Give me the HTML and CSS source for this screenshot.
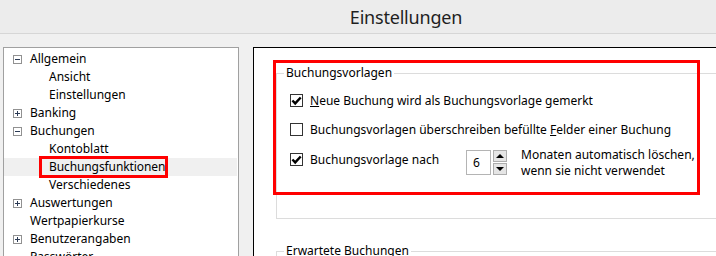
FILE: index.html
```html
<!DOCTYPE html>
<html lang="de">
<head>
<meta charset="utf-8">
<title>Einstellungen</title>
<link rel="stylesheet" href="styles.css">
</head>
<body>
<header class="titlebar"><h1 class="title">Einstellungen</h1></header>
<main class="content">
  <nav class="tree">
    <ul class="tree-list">
      <li class="node"><span class="exp minus"></span><span class="label">Allgemein</span></li>
      <li class="node child"><span class="label">Ansicht</span></li>
      <li class="node child"><span class="label">Einstellungen</span></li>
      <li class="node"><span class="exp plus"></span><span class="label">Banking</span></li>
      <li class="node"><span class="exp minus"></span><span class="label">Buchungen</span></li>
      <li class="node child"><span class="label">Kontoblatt</span></li>
      <li class="node child selected"><span class="label marked">Buchungsfunktionen</span></li>
      <li class="node child"><span class="label">Verschiedenes</span></li>
      <li class="node"><span class="exp plus"></span><span class="label">Auswertungen</span></li>
      <li class="node"><span class="label indent">Wertpapierkurse</span></li>
      <li class="node"><span class="exp plus"></span><span class="label">Benutzerangaben</span></li>
      <li class="node"><span class="label indent">Passwörter</span></li>
    </ul>
  </nav>
  <section class="panel">
    <div class="highlight"></div>
    <fieldset class="group">
      <legend class="legend">Buchungsvorlagen</legend>
      <div class="row">
        <span class="cb checked"><svg viewBox="0 0 11 11" width="11" height="11"><path d="M1.4 5.5 L4.2 8.4 L9.7 2.5" fill="none" stroke="#000" stroke-width="2.4"/></svg></span>
        <span class="cb-text"><u>N</u>eue Buchung wird als Buchungsvorlage gemerkt</span>
      </div>
      <div class="row">
        <span class="cb"></span>
        <span class="cb-text">Buchungsvorlagen überschreiben befüllte <u>F</u>elder einer Buchung</span>
      </div>
      <div class="row row-spin">
        <span class="cb checked"><svg viewBox="0 0 11 11" width="11" height="11"><path d="M1.4 5.5 L4.2 8.4 L9.7 2.5" fill="none" stroke="#000" stroke-width="2.4"/></svg></span>
        <span class="cb-text nach">Buchungsvorlage nach</span>
        <span class="spin-input">6</span>
        <span class="spin-btns">
          <span class="spin-btn"><span class="tri up"></span></span>
          <span class="spin-btn"><span class="tri down"></span></span>
        </span>
        <span class="spin-text">Monaten automatisch löschen,<br>wenn sie nicht verwendet</span>
      </div>
    </fieldset>
    <fieldset class="group group2">
      <legend class="legend">Erwartete Buchungen</legend>
    </fieldset>
  </section>
</main>
</body>
</html>
```

FILE: styles.css
```css
* { box-sizing: border-box; }
html, body {
  margin: 0;
  padding: 0;
  width: 716px;
  height: 256px;
  overflow: hidden;
  background: #f0f0f0;
  font-family: "Noto Sans", "Open Sans", sans-serif;
  font-size: 12px;
  color: #000;
}
.titlebar {
  height: 34px;
  background: #ececec;
  border-bottom: 1px solid #d6d6d6;
  display: flex;
  align-items: center;
  justify-content: center;
}
.title {
  margin: 0 0 0 96px;
  font-weight: normal;
  font-size: 18px;
  color: #1f1f1f;
  letter-spacing: -0.2px;
}
.content {
  display: flex;
  padding-top: 13px;
  height: 222px;
  overflow: hidden;
}
.tree {
  margin-left: 3px;
  width: 236px;
  flex: none;
  background: #fff;
  border: 1px solid #a0a0a0;
  border-bottom: none;
  padding-top: 2px;
}
.tree-list {
  list-style: none;
  margin: 0;
  padding: 0;
}
.node {
  height: 18px;
  display: flex;
  align-items: center;
  padding-left: 9px;
  margin-right: 1px;
}
.node.child { padding-left: 45px; }
.node.selected { background: #f0f0f0; }
.label { white-space: nowrap; line-height: 18px; }
.label.indent { margin-left: 17px; }
.label.marked {
  border: 3px solid #ff0000;
  padding: 0 0 0 7px;
  margin-left: -10px;
  height: 22px;
  line-height: 16px;
  letter-spacing: -0.1px;
  flex: none;
}
.exp {
  width: 9px;
  height: 9px;
  border: 1px solid #919191;
  background: #fff;
  margin-right: 8px;
  position: relative;
  flex: none;
}
.exp::before {
  content: "";
  position: absolute;
  left: 1px;
  top: 3px;
  width: 5px;
  height: 1px;
  background: #2b3a55;
}
.plus::after {
  content: "";
  position: absolute;
  left: 3px;
  top: 1px;
  width: 1px;
  height: 5px;
  background: #2b3a55;
}
.panel {
  position: relative;
  margin-left: 14px;
  flex: 1;
  background: #fff;
  border-top: 1px solid #000;
  border-left: 1px solid #000;
  padding-left: 22px;
  overflow: hidden;
}
.highlight {
  position: absolute;
  left: 19px;
  top: 12px;
  width: 427px;
  height: 135px;
  border: 3px solid #ff0000;
  z-index: 2;
  pointer-events: none;
}
.group {
  margin: 17px -20px 0 0;
  padding: 0 0 0 13px;
  border: 1px solid #dcdcdc;
  min-width: 0;
  height: 154px;
}
.legend {
  padding: 0 2px;
  margin-left: -6px;
  line-height: 16px;
}
.row {
  display: flex;
  align-items: center;
  height: 29px;
}
.row:first-of-type { margin-top: 5px; }
.cb {
  width: 13px;
  height: 13px;
  border: 1px solid #333;
  background: #fff;
  display: flex;
  align-items: center;
  justify-content: center;
  flex: none;
  margin-right: 7px;
}
.cb svg { display: block; }
.cb-text { white-space: nowrap; }
.row-spin { height: 30px; align-items: center; }
.nach { width: 156px; }
.spin-input {
  width: 25px;
  height: 25px;
  border: 1px solid #b4b4b4;
  padding: 4px 0 0 6px;
  line-height: 16px;
  margin-top: 6px;
}
.spin-btns {
  display: flex;
  flex-direction: column;
  gap: 1px;
  margin-left: 2px;
  margin-top: 6px;
}
.spin-btn {
  width: 14px;
  height: 12px;
  background: #e5e5e5;
  border: 1px solid #adadad;
  display: flex;
  align-items: center;
  justify-content: center;
}
.tri {
  width: 0;
  height: 0;
  border-left: 4px solid transparent;
  border-right: 4px solid transparent;
}
.tri.up { border-bottom: 4px solid #000; }
.tri.down { border-top: 4px solid #000; }
.spin-text {
  margin-left: 14px;
  line-height: 16px;
  margin-top: 7px;
}
.group2 {
  margin-top: 24px;
  height: 40px;
}
```
